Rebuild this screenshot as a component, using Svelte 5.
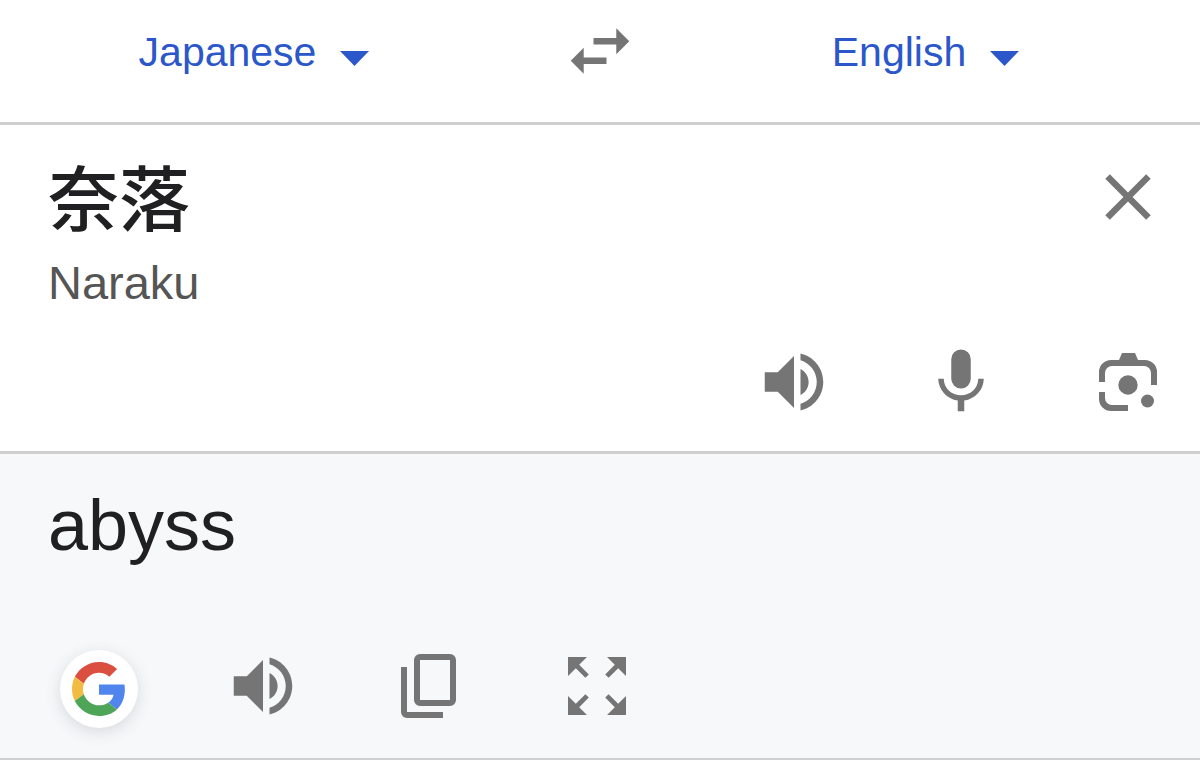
<script>
  let from = $state('Japanese');
  let to = $state('English');
  let source = $state('奈落');
  const languages = ['English', 'Japanese'];

  function swap() {
    [from, to] = [to, from];
  }
</script>

{#snippet speaker()}
  <svg class="icon" viewBox="0 0 24 24" aria-hidden="true">
    <path d="M3 9v6h4l5 5V4L7 9H3zM16.500 12c0-1.770-1.020-3.290-2.500-4.030v8.050c1.480-.73 2.500-2.250 2.500-4.020zM14 3.230v2.060c2.890.86 5 3.540 5 6.710s-2.110 5.850-5 6.710v2.060c4.010-.91 7-4.490 7-8.770s-2.990-7.860-7-8.770z" />
  </svg>
{/snippet}

{#snippet caret()}
  <svg class="caret" viewBox="0 0 29 15" aria-hidden="true"><path d="M0 0h29L14.500 15z" /></svg>
{/snippet}

<main>
  <header>
    <label class="language from">
      <select bind:value={from} aria-label="Source language">
        {#each languages as name}<option>{name}</option>{/each}
      </select>
      {@render caret()}
    </label>
    <button aria-label="Swap languages" onclick={swap}>
      <svg class="icon" viewBox="0 0 24 24" aria-hidden="true">
        <path d="M6.990 11L3 15l3.990 4v-3H14v-2H6.990v-3zM21 9l-3.990-4v3H10v2h7.010v3L21 9z" />
      </svg>
    </button>
    <label class="language to">
      <select bind:value={to} aria-label="Target language">
        {#each languages as name}<option>{name}</option>{/each}
      </select>
      {@render caret()}
    </label>
  </header>

  <section class="source">
    <div class="entry">
      <div class="words">
        <textarea rows="1" lang="ja" aria-label="Text to translate" spellcheck="false" bind:value={source}></textarea>
        <p class="reading">Naraku</p>
      </div>
      <button aria-label="Clear text" onclick={() => (source = '')}>
        <svg class="icon" viewBox="0 0 24 24" aria-hidden="true">
          <path d="M19 6.410L17.590 5 12 10.590 6.410 5 5 6.410 10.590 12 5 17.590 6.410 19 12 13.410 17.590 19 19 17.590 13.410 12z" />
        </svg>
      </button>
    </div>
    <div class="tools end">
      <button aria-label="Listen to source">{@render speaker()}</button>
      <button aria-label="Speak">
        <svg class="icon" viewBox="0 0 24 24" aria-hidden="true">
          <path d="M12 14a3 3 0 0 0 3-3V5a3 3 0 0 0-6 0v6a3 3 0 0 0 3 3zM17.300 11c0 3-2.540 5.100-5.300 5.100S6.700 14 6.700 11H5c0 3.410 2.720 6.230 6 6.720V21h2v-3.280c3.280-.48 6-3.300 6-6.720h-1.700z" />
        </svg>
      </button>
      <button aria-label="Search with camera">
        <svg class="icon" viewBox="0 0 78 78" aria-hidden="true">
          <path d="M10 39V29a12 12 0 0 1 12-12h8l3-7h13l3 7h7a12 12 0 0 1 12 12v13h-6V30a7 7 0 0 0-7-7H23a7 7 0 0 0-7 7v9zM10 49h6v6a7 7 0 0 0 7 7h16v6H22a12 12 0 0 1-12-12z" />
          <circle cx="39" cy="42" r="9.700" />
          <circle cx="58.500" cy="58" r="6.500" />
        </svg>
      </button>
    </div>
  </section>

  <section class="result">
    <p class="translation">abyss</p>
    <div class="tools spread">
      <button class="google" aria-label="Search on Google">
        <svg class="logo" viewBox="0 0 48 48" aria-hidden="true">
          <path fill="#db4f40" d="M24 9.500c3.540 0 6.710 1.220 9.210 3.600l6.850-6.850C35.900 2.380 30.470 0 24 0 14.620 0 6.510 5.380 2.560 13.220l7.980 6.190C12.430 13.720 17.740 9.500 24 9.500z" />
          <path fill="#5085ed" d="M46.980 24.550c0-1.570-.15-3.090-.38-4.550H24v9.020h12.940c-.58 2.960-2.260 5.480-4.780 7.180l7.730 6c4.510-4.180 7.090-10.360 7.090-17.650z" />
          <path fill="#f2bc42" d="M10.530 28.590c-.48-1.450-.76-2.990-.76-4.590s.27-3.140.76-4.590l-7.980-6.190C.92 16.460 0 20.120 0 24c0 3.880.92 7.540 2.560 10.780l7.970-6.190z" />
          <path fill="#4ea457" d="M24 48c6.480 0 11.930-2.130 15.890-5.810l-7.730-6c-2.150 1.450-4.920 2.300-8.160 2.300-6.260 0-11.570-4.220-13.470-9.910l-7.980 6.190C6.510 42.620 14.620 48 24 48z" />
        </svg>
      </button>
      <div class="tools">
        <button aria-label="Listen to translation">{@render speaker()}</button>
        <button aria-label="Copy translation">
          <svg class="icon" viewBox="0 0 78 78" aria-hidden="true">
            <path fill-rule="evenodd" d="M29 7h30a6 6 0 0 1 6 6v40a6 6 0 0 1-6 6H29a6 6 0 0 1-6-6V13a6 6 0 0 1 6-6zM29 13v40h30V13z" />
            <path d="M10 20h6v45h36v6H16a6 6 0 0 1-6-6z" />
          </svg>
        </button>
        <button aria-label="Full screen">
          <svg class="icon" viewBox="0 0 78 78" aria-hidden="true">
            <path d="M10 10h19l-7.800 7.800 9.600 9.600-3.400 3.400-9.600-9.600L10 29z" />
            <path d="M68 10H49l7.800 7.800-9.600 9.600 3.400 3.400 9.600-9.600L68 29z" />
            <path d="M10 68h19l-7.800-7.800 9.600-9.600-3.400-3.400-9.600 9.600L10 49z" />
            <path d="M68 68H49l7.800-7.800-9.600-9.600 3.400-3.400 9.600 9.600L68 49z" />
          </svg>
        </button>
      </div>
    </div>
  </section>
</main>

<style>
  :global(body) {
    margin: 0;
    background: #fff;
  }
  main {
    font-family: "Liberation Sans", "Noto Sans CJK JP", sans-serif;
    color: #202022;
  }
  header {
    display: grid;
    grid-template-columns: 1fr auto 1fr;
    align-items: center;
    padding: 12px 0 32px;
    border-bottom: 3px solid #cfcfcf;
  }
  .language {
    display: flex;
    align-items: center;
    justify-content: center;
    gap: 24px;
    padding-top: 2px;
    color: #2c57cb;
  }
  .from {
    padding-right: 53px;
  }
  .to {
    padding-left: 12px;
  }
  select {
    field-sizing: content;
    appearance: none;
    margin: 0;
    padding: 0;
    border: 0;
    background: none;
    color: inherit;
    font: inherit;
    font-size: 41px;
    line-height: 52px;
  }
  .caret {
    width: 29px;
    height: 15px;
    margin-top: 12px;
    fill: currentColor;
  }
  button {
    display: flex;
    align-items: center;
    justify-content: center;
    flex: none;
    padding: 0;
    border: 0;
    background: none;
    color: #757575;
    cursor: pointer;
  }
  .icon {
    display: block;
    width: 78px;
    height: 78px;
    fill: currentColor;
  }
  .tools .icon {
    overflow: visible;
  }
  section {
    border-bottom: 3px solid #cfcfcf;
  }
  .source {
    padding: 33px 33px 30px 48px;
  }
  .entry {
    display: flex;
    align-items: flex-start;
  }
  .words {
    flex: 1;
    min-width: 0;
  }
  textarea {
    display: block;
    box-sizing: border-box;
    width: 100%;
    height: 88px;
    margin: 0;
    padding: 0;
    border: 0;
    outline: 0;
    resize: none;
    overflow: hidden;
    background: none;
    color: inherit;
    font-family: "Noto Sans CJK JP", sans-serif;
    font-size: 71px;
    font-weight: 500;
    line-height: 72px;
  }
  p {
    margin: 0;
  }
  .reading {
    color: #555;
    font-size: 47px;
    line-height: 74px;
  }
  .tools {
    display: flex;
    gap: 89px;
  }
  .end {
    justify-content: flex-end;
    padding-top: 23px;
  }
  .result {
    padding: 31px 48px 30px;
    background: #f7f8fa;
  }
  .translation {
    font-size: 72px;
    line-height: 80px;
  }
  .spread {
    align-items: flex-start;
    gap: 86px;
    padding: 82px 12px 0;
  }
  .google {
    width: 78px;
    height: 78px;
    margin-top: 3px;
    border-radius: 50%;
    background: #fff;
    box-shadow: 0 4px 16px rgba(60, 64, 67, 0.16);
  }
  .logo {
    width: 54px;
    height: 54px;
  }
</style>
